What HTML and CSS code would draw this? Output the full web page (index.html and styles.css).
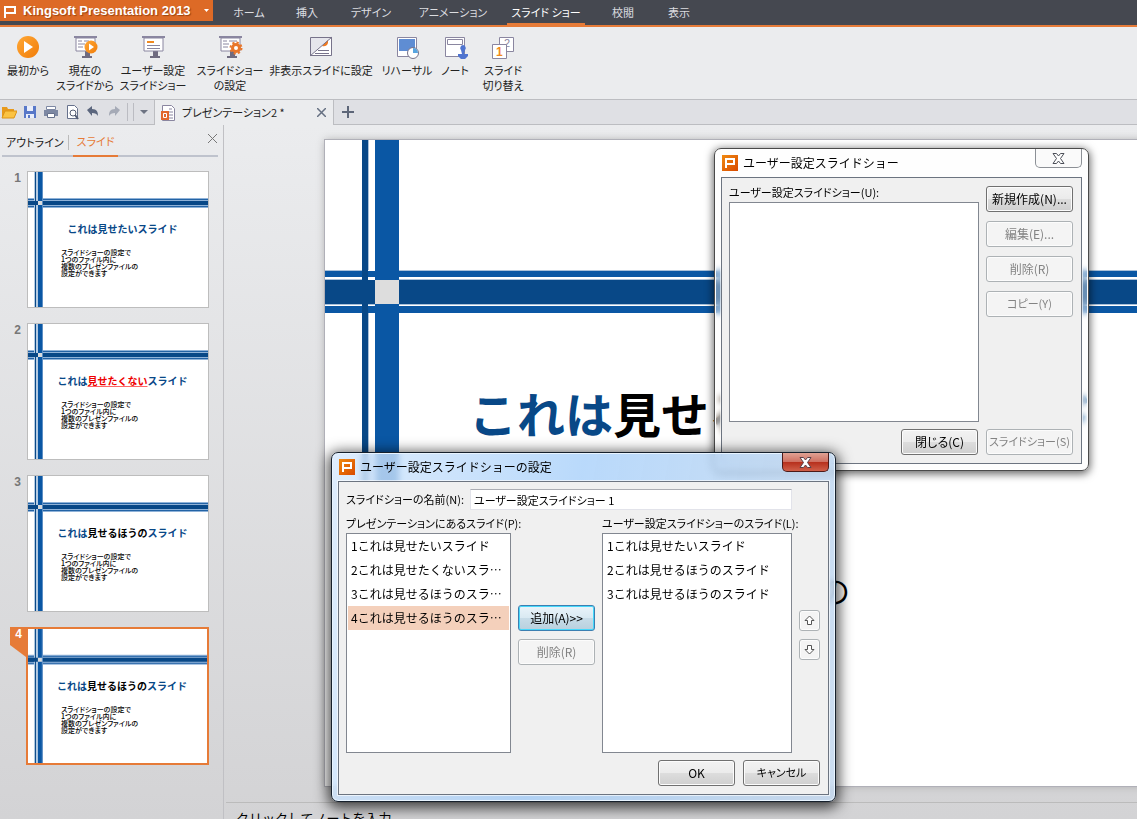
FILE: index.html
```html
<!DOCTYPE html>
<html lang="ja">
<head>
<meta charset="utf-8">
<title>Kingsoft Presentation 2013</title>
<link rel="stylesheet" href="styles.css">
</head>
<body>
<svg class="defs" width="0" height="0" aria-hidden="true">
  <defs>
    <linearGradient id="play" x1="0" y1="0" x2="1" y2="1"><stop offset="0" stop-color="#ffa836"/><stop offset="1" stop-color="#f17c08"/></linearGradient>
    <linearGradient id="app" x1="0" y1="0" x2="1" y2="1"><stop offset="0" stop-color="#f08a10"/><stop offset="1" stop-color="#d94a00"/></linearGradient>
    <symbol id="board" viewBox="0 0 26 24">
      <path d="M10 22h10M14 16h3v6h-3z" fill="#6f6b80" stroke="#6f6b80" stroke-width="2"/>
      <path d="M4 3h19v13H4z" fill="#fff" stroke="#8a86a0"/>
      <path d="M2 2h23" stroke="#8a86a0" stroke-width="2"/>
    </symbol>
    <symbol id="applogo" viewBox="0 0 16 16">
      <path d="M0 0h16v16H0z" fill="url(#app)"/>
      <path d="M4 13V4h8v5H4" fill="none" stroke="#fff" stroke-width="2"/>
    </symbol>
    <symbol id="thumbart" viewBox="0 0 180 135">
      <path d="M0 26h180v10H0z" fill="#8fb2d8"/>
      <path d="M0 27.500h180M0 34.500h180" stroke="#2363a5"/>
      <path d="M0 29h180v4H0z" fill="#084887"/>
      <path d="M6 0h3v135H6zM9 0h6v135H9z" fill="#b5cbe2"/>
      <path d="M7 0h1v135H7z" fill="#084887"/>
      <path d="M10 0h4v135h-4z" fill="#0a57a4"/>
      <path d="M14 0h1v135h-1z" fill="#5d8fc4"/>
      <path d="M0 29h10v4H0z" fill="#084887"/>
      <path d="M10 29h4v4h-4z" fill="#ddd"/>
    </symbol>
  </defs>
</svg>

<header class="menubar">
  <button class="brand">
    <svg width="14" height="14" viewBox="0 0 14 14"><path d="M3 14V3h10v6H3" fill="none" stroke="#fff" stroke-width="2"/></svg>
    <span>Kingsoft Presentation 2013</span>
    <svg class="brand-arrow" width="5" height="3" viewBox="0 0 5 3"><path d="M0 0h5L2.500 3z" fill="#fff"/></svg>
  </button>
  <nav class="menu">
    <button class="m68">ホーム</button>
    <button class="m48">挿入</button>
    <button class="m80">デザイン</button>
    <button class="m84">アニメーション</button>
    <button class="m102 current"><span>スライド ショー</span></button>
    <button class="m52">校閲</button>
    <button class="m60">表示</button>
  </nav>
</header>

<section class="ribbon">
  <button class="r56"><svg width="26" height="24" viewBox="0 0 26 24"><circle cx="13" cy="12" r="11" fill="url(#play)"/><path d="M9 6l9 6-9 6z" fill="#fff"/></svg><span>最初から</span></button>
  <button class="r58"><svg width="26" height="24" viewBox="0 0 26 24"><use href="#board"/><path d="M6 6h4M12 6h5M6 9h7M6 12h5" stroke="#8a86a0"/><circle cx="19" cy="12" r="6.500" fill="url(#play)"/><path d="M17 8.500l5 3.500-5 3.500z" fill="#fff"/></svg><span>現在の<br>スライドから</span></button>
  <button class="r78"><svg width="26" height="24" viewBox="0 0 26 24"><use href="#board"/><path d="M7 7h7" stroke="#f08a20" stroke-width="2"/><path d="M7 10.500h13M7 13.500h13" stroke="#8a86a0"/></svg><span>ユーザー設定<br>スライドショー</span></button>
  <button class="r76"><svg width="26" height="24" viewBox="0 0 26 24"><use href="#board"/><path d="M6 6h4M12 6h8M6 9h6M6 12h5" stroke="#8a86a0"/><circle cx="19" cy="13" r="3.500" fill="#fff" stroke="#e8762b" stroke-width="3"/><circle cx="19" cy="13" r="5.500" fill="none" stroke="#e8762b" stroke-width="2" stroke-dasharray="2.200 2.100"/></svg><span>スライドショー<br>の設定</span></button>
  <button class="r106"><svg width="26" height="24" viewBox="0 0 26 24"><path d="M2.500 2.500h21v18h-21z" fill="#e6e6ec" stroke="#77738a"/><path d="M3 20L23 3v17z" fill="#fff"/><path d="M14 11l6-6v3a5 5 0 0 1-6 3z" fill="#f07a20"/><path d="M10 15.500h11M7 18.500h14M2 21L24 2" stroke="#77738a"/></svg><span>非表示スライドに設定</span></button>
  <button class="r66"><svg width="26" height="24" viewBox="0 0 26 24"><path d="M3.500 2.500h19v19h-19z" fill="#fff" stroke="#8a86a0"/><path d="M5 4h16v12H5z" fill="#5f8dd3"/><circle cx="19" cy="18" r="5.500" fill="#fff" stroke="#77738a"/><path d="M19 18v-5a5 5 0 0 1 5 5z" fill="#58a5e0"/></svg><span>リハーサル</span></button>
  <button class="r30"><svg width="26" height="24" viewBox="0 0 26 24"><path d="M3.500 2.500h19v19h-19z" fill="#fff" stroke="#8a86a0"/><path d="M5.500 4.500h15v5h-15z" fill="#fff" stroke="#8a86a0"/><path d="M21 10a3 3 0 0 1 2 5l-1 4h4v2l-3 3h-4l-3-3v-2h4l-1-4a3 3 0 0 1 2-5z" fill="#4f74d0"/></svg><span>ノート</span></button>
  <button class="r66"><svg width="26" height="24" viewBox="0 0 26 24"><path d="M9.500 2.500h14v14h-14z" fill="#fff" stroke="#8a86a0"/><text class="icon-two" x="14" y="12">2</text><path d="M2.500 9.500h14v14h-14z" fill="#fff" stroke="#8a86a0"/><text class="icon-one" x="6" y="21">1</text></svg><span>スライド<br>切り替え</span></button>
</section>

<section class="tabstrip">
  <div class="quick">
    <button aria-label="開く"><svg width="16" height="16" viewBox="0 0 16 16"><path d="M1 3h5l1 2h6v3H4l-3 6z" fill="#e89a1c"/><path d="M4 7h12l-3 7H1z" fill="#fbc343" stroke="#dd9416"/></svg></button>
    <button aria-label="保存"><svg width="16" height="16" viewBox="0 0 16 16"><path d="M2 2h12v12H2z" fill="#5878c8"/><path d="M5 2h6v5H5zM4 10h8v4H4z" fill="#e9eefb"/><path d="M6 11h2v3H6z" fill="#5878c8"/></svg></button>
    <button aria-label="印刷"><svg width="16" height="16" viewBox="0 0 16 16"><path d="M3.500 2.500h9v3h-9z" fill="#fff" stroke="#7d88a3"/><path d="M1 6h14v6H1z" fill="#7d88a3"/><path d="M4.500 9.500h7v4h-7z" fill="#fff" stroke="#66718c"/></svg></button>
    <button aria-label="印刷プレビュー"><svg width="16" height="16" viewBox="0 0 16 16"><path d="M3.500 1.500h7l3 3v10h-10z" fill="#fff" stroke="#66718c"/><circle cx="9" cy="9" r="3" fill="#fff" stroke="#555e74"/><path d="M11 11l3 4" stroke="#555e74" stroke-width="2"/></svg></button>
    <button aria-label="元に戻す"><svg width="16" height="16" viewBox="0 0 16 16"><path d="M2 6l5-4v3c5 0 6 3 6 7-1-2-3-3-6-3v3z" fill="#5b667d"/></svg></button>
    <button aria-label="やり直し"><svg width="16" height="16" viewBox="0 0 16 16"><path d="M14 6L9 2v3c-5 0-6 3-6 7 1-2 3-3 6-3v3z" fill="#a5aab6"/></svg></button>
    <i></i>
    <button class="more" aria-label="その他"><svg width="16" height="16" viewBox="0 0 16 16"><path d="M4 6h8l-4 4z" fill="#6d7382"/></svg></button>
  </div>
  <div class="doctab">
    <svg width="16" height="18" viewBox="0 0 16 18"><path d="M2.500 1.500h9l3 3v12h-12z" fill="#fff" stroke="#8a86a0"/><path d="M9 5h3M9 8h4M9 11h4M9 14h4" stroke="#8a86a0"/><path d="M1 7h8v9H1z" fill="#e2662a"/><path d="M3.500 9.500h3v4h-3z" fill="none" stroke="#fff"/></svg>
    <span>プレゼンテーション2 *</span>
    <button aria-label="閉じる"><svg width="9" height="9" viewBox="0 0 9 9"><path d="M0 0l9 9M9 0L0 9" stroke="#667082" stroke-width="1.500"/></svg></button>
  </div>
  <button class="newtab" aria-label="新規"><svg width="12" height="12" viewBox="0 0 12 12"><path d="M6 0v12M0 6h12" stroke="#5d6678" stroke-width="2"/></svg></button>
</section>

<main class="work">
  <aside class="side">
    <div class="sidehead">
      <button>アウトライン</button>
      <i></i>
      <button class="on">スライド</button>
      <button class="sideclose" aria-label="閉じる"><svg width="9" height="9" viewBox="0 0 9 9"><path d="M0 0l9 9M9 0L0 9" stroke="#777"/></svg></button>
    </div>
    <ol class="thumbs">
      <li><b>1</b><div class="thumb"><svg viewBox="0 0 180 135"><use href="#thumbart"/></svg><div class="copy"><h3>これは見せたいスライド</h3><p>スライドショーの設定で<br>1つのファイル内に<br>複数のプレゼンファイルの<br>設定ができます</p></div></div></li>
      <li><b>2</b><div class="thumb"><svg viewBox="0 0 180 135"><use href="#thumbart"/></svg><div class="copy"><h3>これは<u>見せたくない</u>スライド</h3><p>スライドショーの設定で<br>1つのファイル内に<br>複数のプレゼンファイルの<br>設定ができます</p></div></div></li>
      <li><b>3</b><div class="thumb"><svg viewBox="0 0 180 135"><use href="#thumbart"/></svg><div class="copy"><h3>これは<em>見せるほうの</em>スライド</h3><p>スライドショーの設定で<br>1つのファイル内に<br>複数のプレゼンファイルの<br>設定ができます</p></div></div></li>
      <li class="sel"><b>4</b><div class="thumb"><svg viewBox="0 0 180 135"><use href="#thumbart"/></svg><div class="copy"><h3>これは<em>見せるほうの</em>スライド</h3><p>スライドショーの設定で<br>1つのファイル内に<br>複数のプレゼンファイルの<br>設定ができます</p></div></div></li>
    </ol>
  </aside>

  <section class="editor">
    <article class="slide">
      <svg viewBox="0 0 860 646">
        <path d="M0 131h860v6H0zM0 166h860v7H0z" fill="#0a57a4"/>
        <path d="M0 130.500h860M0 139.500h860M0 164.500h860" stroke="#a9c0d8"/>
        <path d="M0 140h860v24H0z" fill="#084887"/>
        <path d="M43 0h7v131h-7zM43 137h7v3h-7zM43 173h7v473h-7z" fill="#fff"/>
        <path d="M43.500 0v130M43.500 173v473" stroke="#a9c0d8"/>
        <path d="M37 0h6v646h-6z" fill="#084887"/>
        <path d="M50 0h24v646H50z" fill="#0a57a4"/>
        <path d="M50 140h24v24H50z" fill="#ddd"/>
      </svg>
      <div class="copy">
        <h1>これは<em>見せるほうの</em>スライド</h1>
        <p>スライドショーの設定で<br>1つのファイル内に<br>複数のプレゼンファイルの<br>設定ができます</p>
      </div>
    </article>
    <div class="notes">クリックしてノートを入力</div>
  </section>
</main>

<section class="window shows" role="dialog" aria-labelledby="t1">
  <header><svg width="16" height="16"><use href="#applogo"/></svg><h2 id="t1">ユーザー設定スライドショー</h2>
    <button class="close" aria-label="閉じる"><svg width="13" height="11" viewBox="0 0 13 11"><path d="M1 .5h3.500l2 2.500 2-2.500H12l-3.500 5 3.500 5H8.500l-2-2.500-2 2.500H1l3.500-5z" fill="#fff" stroke="#4c4f58"/></svg></button></header>
  <div class="body">
    <div class="caption" id="c1">ユーザー設定スライドショー(U):</div>
    <div class="pair">
      <ul class="list" role="listbox" aria-labelledby="c1"></ul>
      <div class="stack">
        <button class="btn wide">新規作成(N)...</button>
        <button class="btn wide" disabled>編集(E)...</button>
        <button class="btn wide" disabled>削除(R)</button>
        <button class="btn wide kana" disabled>コピー(Y)</button>
      </div>
    </div>
    <div class="actions"><button class="btn">閉じる(C)</button><button class="btn wide kana" disabled>スライドショー(S)</button></div>
  </div>
</section>

<section class="window define active" role="dialog" aria-labelledby="t2">
  <header><svg width="16" height="16"><use href="#applogo"/></svg><h2 id="t2">ユーザー設定スライドショーの設定</h2>
    <button class="close" aria-label="閉じる"><svg width="13" height="11" viewBox="0 0 13 11"><path d="M1 .5h3.500l2 2.500 2-2.500H12l-3.500 5 3.500 5H8.500l-2-2.500-2 2.500H1l3.500-5z" fill="#fff" stroke="#5b4048"/></svg></button></header>
  <div class="body">
    <div class="namerow"><label for="nm">スライドショーの名前(N):</label><input id="nm" type="text" value="ユーザー設定スライドショー 1"></div>
    <div class="columns">
      <div class="left">
        <div class="caption" id="c2">プレゼンテーションにあるスライド(P):</div>
        <ul class="list" role="listbox" aria-labelledby="c2">
          <li role="option">1これは見せたいスライド</li>
          <li role="option">2これは見せたくないスラ…</li>
          <li role="option">3これは見せるほうのスラ…</li>
          <li role="option" aria-selected="true" class="picked">4これは見せるほうのスラ…</li>
        </ul>
      </div>
      <div class="stack middle"><button class="btn focus">追加(A)&gt;&gt;</button><button class="btn" disabled>削除(R)</button></div>
      <div class="right">
        <div class="caption" id="c3">ユーザー設定スライドショーのスライド(L):</div>
        <ul class="list" role="listbox" aria-labelledby="c3">
          <li role="option">1これは見せたいスライド</li>
          <li role="option">2これは見せるほうのスライド</li>
          <li role="option">3これは見せるほうのスライド</li>
        </ul>
      </div>
      <div class="stack arrows">
        <button class="btn sq" aria-label="上へ"><svg width="11" height="11" viewBox="0 0 11 11"><path d="M5.500 1L10 5.500H7.500v4h-4v-4H1z" fill="#fff" stroke="#555"/></svg></button>
        <button class="btn sq" aria-label="下へ"><svg width="11" height="11" viewBox="0 0 11 11"><path d="M5.500 10L1 5.500h2.500v-4h4v4H10z" fill="#fff" stroke="#555"/></svg></button>
      </div>
    </div>
    <div class="actions"><button class="btn">OK</button><button class="btn kana">キャンセル</button></div>
  </div>
</section>
</body>
</html>
```

FILE: styles.css
```css
* { box-sizing: border-box; }
body {
  margin: 0;
  height: 100vh;
  overflow: hidden;
  display: flex;
  flex-direction: column;
  position: relative;
  font: 11px/15px "Noto Sans CJK JP", sans-serif;
  font-feature-settings: "palt";
  color: #222;
  background: #d8d8da;
}
button { font: inherit; font-feature-settings: inherit; color: inherit; background: none; border: 0; padding: 0; margin: 0; white-space: nowrap; }
h1, h2, h3, p, ul, ol { margin: 0; padding: 0; list-style: none; font-weight: normal; }
em { font-style: normal; color: #000; }
svg { flex: none; display: block; }
.defs { position: absolute; }

/* menu bar */
.menubar { flex: none; display: flex; height: 27px; background: #454850; border-bottom: 2px solid #e67b38; }
.brand { width: 213px; height: 21px; display: flex; align-items: center; gap: 7px; padding-left: 2px; background: #dd6a26; color: #fff; font: bold 13px/20px "Liberation Sans", Arial, sans-serif; text-shadow: 1px 1px 1px #9c4310; }
.brand-arrow { margin: 0 4px 0 auto; }
.menu { display: flex; padding-left: 2px; }
.menu button { color: #dcdde0; display: flex; justify-content: center; align-items: center; height: 25px; }
.menu .current { color: #fff; }
.menu .current span { height: 25px; line-height: 24px; width: 78px; border-bottom: 2px solid #e67b38; }
.m48 { width: 48px; } .m52 { width: 52px; } .m60 { width: 60px; } .m68 { width: 68px; }
.m80 { width: 80px; } .m84 { width: 84px; } .m102 { width: 102px; }

/* ribbon */
.ribbon { flex: none; display: flex; height: 73px; padding-top: 8px; background: #ebecee; border-bottom: 1px solid #bcbdc1; }
.ribbon button { display: flex; flex-direction: column; align-items: center; gap: 4px; height: 60px; line-height: 15px; }
.r30 { width: 30px; } .r56 { width: 56px; } .r58 { width: 58px; } .r66 { width: 66px; }
.r76 { width: 76px; } .r78 { width: 78px; } .r106 { width: 106px; }
.icon-one { font: bold 12px "Liberation Sans", sans-serif; fill: #f28a1c; }
.icon-two { font: 11px "Liberation Sans", sans-serif; fill: #8a86a0; }

/* document tabs */
.tabstrip { flex: none; display: flex; height: 25px; background: #dfe0e4; border-bottom: 1px solid #bcbdc1; }
.quick { display: flex; align-items: center; gap: 5px; width: 154px; padding-left: 1px; }
.quick i { width: 7px; height: 18px; border: solid #bbbcc2; border-width: 0 1px; }
.quick .more { margin-left: -3px; }
.doctab { width: 180px; height: 25px; display: flex; align-items: center; gap: 6px; padding: 0 7px 0 5px; background: #ebecee; border: solid #bcbdc1; border-width: 0 1px; }
.doctab button { margin-left: auto; }
.newtab { padding: 0 8px; }

/* work area */
.work { flex: 1; min-height: 0; display: flex; background: linear-gradient(#ebecee, #d3d3d5); }
.side { width: 224px; flex: none; border-right: 1px solid #c0c0c4; }
.sidehead { display: flex; align-items: center; height: 32px; margin: 0 5px 14px 2px; padding-top: 4px; border-bottom: 2px solid #bfc3cd; }
.sidehead > button { padding: 0 4px; }
.sidehead i { width: 1px; height: 15px; background: #bbb; }
.sidehead .on { color: #e67b38; height: 28px; margin: 2px 0 0 4px; padding-bottom: 2px; border-bottom: 2px solid #e67b38; }
.sidehead .sideclose { margin: 0 0 8px auto; padding: 0 1px; }
.thumbs { display: flex; flex-direction: column; gap: 15px; }
.thumbs li { display: flex; align-items: flex-start; }
.thumbs b { width: 27px; padding: 0 6px 0 0; text-align: right; color: #777; font: bold 12px/14px "Liberation Sans", sans-serif; }
.thumb { display: grid; width: 182px; border: 1px solid #bdbdbd; background: #fff; }
.thumb > *, .slide > * { grid-area: 1 / 1; }
.thumb .copy { padding-top: 50px; }
.thumb h3 { text-align: center; padding-left: 9px; font-size: 10px; line-height: 14px; font-weight: 700; color: #084887; font-feature-settings: normal; }
.thumb u { color: #e00; text-decoration-color: #f66; }
.thumb p { padding: 13px 0 0 33px; font-size: 7px; line-height: 7px; font-weight: 500; color: #000; }
.sel .thumb { border: 2px solid #e67b38; width: 183px; }
.thumbs .sel b { width: 16px; height: 30px; margin-left: 10px; padding: 0 4px 0 0; background: #e67b38; color: #fff; clip-path: polygon(0 0, 100% 0, 100% 100%, 0 60%); }

.editor { flex: 1; min-width: 0; overflow: hidden; }
.slide { display: grid; width: 860px; margin: 15px 0 16px 101px; background: #fff; outline: 1px solid #b0b0b8; box-shadow: 0 0 8px #aaa; }
.slide .copy { padding: 232px 0 0 144px; white-space: nowrap; font-feature-settings: normal; }
.slide h1 { font-size: 48px; line-height: 80px; font-weight: 700; color: #084887; }
.slide p { padding: 60px 0 0 10px; font-size: 31px; line-height: 31px; color: #000; }
.notes { margin-left: 2px; padding: 7px 10px; border-top: 1px solid #bbb; font-size: 13px; font-feature-settings: normal; color: #000; }

/* dialogs */
.window { position: absolute; border: 1px solid #4a4a4a; border-radius: 7px; padding: 0 6px 6px; color: #000; background: rgba(252, 252, 252, .4); backdrop-filter: blur(3px); box-shadow: inset 0 0 0 1px #fff, 0 2px 9px 1px rgba(0, 0, 0, .6); }
.shows { left: 714px; top: 148px; width: 375px; }
.define { left: 331px; top: 452px; width: 505px; }
.window.active { border-color: #16202c; background: linear-gradient(100deg, rgba(214, 232, 252, .8), rgba(168, 208, 250, .8) 45%, rgba(196, 216, 238, .85)); box-shadow: inset 0 0 0 1px #e8f4ff, 0 3px 14px 3px rgba(0, 0, 0, .7); }
.window header { display: flex; align-items: center; gap: 5px; height: 28px; padding-left: 1px; }
.window h2 { font-size: 12px; line-height: 18px; padding-bottom: 1px; font-feature-settings: normal; }
.close { align-self: flex-start; margin-left: auto; width: 47px; height: 19px; display: flex; align-items: center; justify-content: center; border: 1px solid #8c9096; border-top: 0; border-radius: 0 0 5px 5px; background: #fafafa; }
.active .close { border-color: #4c1a18; background: linear-gradient(#e0a294, #cf7162 48%, #b7301d 52%, #d0604a); }
.body { border: 1px solid #6c7480; background: #f0f0f0; padding: 7px 8px 8px 7px; box-shadow: 0 0 0 1px #ffffffa0; }
.caption { height: 17px; line-height: 14px; white-space: nowrap; }
.pair { display: flex; gap: 7px; }
.list { background: #fff; border: 1px solid #828790; height: 220px; }
.pair .list { flex: 1; }
.stack { display: flex; flex-direction: column; gap: 8px; }
.pair .stack { gap: 9px; margin-top: -16px; }
.btn { width: 77px; height: 26px; padding-bottom: 2px; font-size: 12px; border: 1px solid #707070; border-radius: 3px; background: linear-gradient(#f2f2f2, #ebebeb 50%, #dddddd 50%, #cfcfcf); box-shadow: inset 0 0 0 1px #fcfcfc; display: flex; align-items: center; justify-content: center; }
.wide { width: 87px; }
.kana { font-size: 11px; }
.btn:disabled { color: #838383; border-color: #adb2b5; background: #f4f4f4; }
.sq { width: 21px; height: 21px; padding: 0; border-color: #adb2b5; background: #f4f4f4; }
.focus { border-color: #3c7fb1; background: linear-gradient(#eaf4fa, #d9e9f2 50%, #c8dce8 50%, #b8d0de); box-shadow: inset 0 0 0 1px #46d8fb; }
.actions { display: flex; justify-content: flex-end; gap: 8px; padding-top: 7px; }

.namerow { display: flex; align-items: center; justify-content: space-between; padding-right: 28px; white-space: nowrap; }
.namerow input { width: 322px; height: 21px; padding: 0 3px; border: 1px solid #e2e3ea; border-top-color: #abadb3; background: #fff; font: inherit; font-feature-settings: inherit; color: #000; }
.columns { display: flex; align-items: flex-start; gap: 7px; padding-top: 6px; }
.define .caption { width: 0; }
.left { width: 165px; }
.right { width: 190px; }
.middle { margin-top: 89px; }
.arrows { margin-top: 94px; }
.list li { margin: 0 1px; padding-left: 3px; font-size: 12px; line-height: 24px; white-space: nowrap; font-feature-settings: normal; }
.list li.picked { background: #f4d0bb; }
```
